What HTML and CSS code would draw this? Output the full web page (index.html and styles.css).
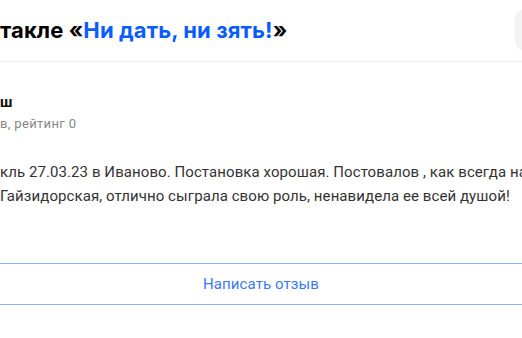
FILE: index.html
```html
<!DOCTYPE html>
<html lang="ru">
<head>
<meta charset="utf-8">
<link rel="stylesheet" href="styles.css">
</head>
<body>
<div class="page">
  <header class="head">
    <h1 class="title">такле «<span class="accent">Ни дать, ни зять!</span>»</h1>
    <div class="tool"></div>
  </header>
  <section class="review">
    <div class="author">ш</div>
    <div class="meta">в, рейтинг 0</div>
    <div class="text">
      <p class="line">кль 27.03.23 в Иваново. Постановка хорошая. Постовалов , как всегда на высоте!</p>
      <p class="line">Гайзидорская, отлично сыграла свою роль, ненавидела ее всей душой!</p>
    </div>
  </section>
  <button class="write">Написать отзыв</button>
</div>
</body>
</html>
```
FILE: styles.css
```css
html, body {
  margin: 0;
  padding: 0;
  background: #fff;
  overflow: hidden;
}
body {
  width: 522px;
  height: 338px;
  font-family: Roboto, "Noto Sans", sans-serif;
  color: #222;
}
.page {
  width: 522px;
  overflow: hidden;
}
.head {
  display: flex;
  align-items: center;
  justify-content: space-between;
  height: 61px;
  padding: 0;
  border-bottom: 1px solid #eeeeee;
  box-sizing: content-box;
}
.title {
  margin: -2px 0 0 0;
  font-family: Inter, "Noto Sans", sans-serif;
  font-size: 22px;
  font-weight: 700;
  color: #000;
  white-space: nowrap;
  letter-spacing: 0.1px;
}
.accent {
  color: #0a5cff;
}
.tool {
  width: 40px;
  height: 40px;
  margin-right: -33px;
  margin-top: -2px;
  background: #f3f3f3;
  border-radius: 8px;
  flex: none;
}
.review {
  padding-top: 30px;
}
.author {
  font-size: 15px;
  font-weight: 700;
  line-height: 20px;
  color: #111;
}
.meta {
  font-size: 13px;
  line-height: 20px;
  margin-top: 2px;
  color: #888;
  letter-spacing: 0.35px;
}
.text {
  margin-top: 26px;
}
.line {
  margin: 0;
  font-size: 15px;
  line-height: 24px;
  color: #333;
  white-space: nowrap;
  letter-spacing: 0.08px;
}
.write {
  display: block;
  box-sizing: border-box;
  width: 560px;
  height: 42px;
  margin: 55px 0 0 -19px;
  padding: 0;
  background: #fff;
  border: 1px solid #8cb2ff;
  border-radius: 8px;
  font-family: Roboto, "Noto Sans", sans-serif;
  font-size: 15px;
  letter-spacing: 0.1px;
  color: #3b78f5;
}
```
